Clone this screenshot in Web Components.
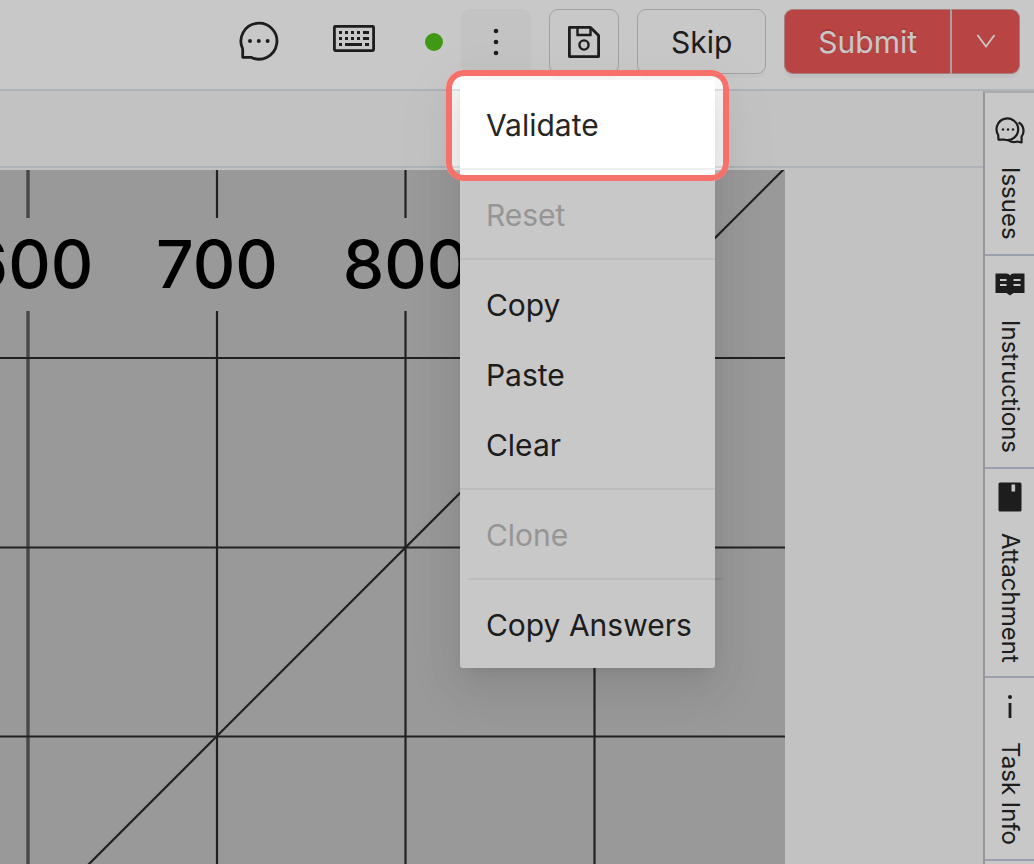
<!DOCTYPE html>
<html lang="en">
  <head>
    <meta charset="UTF-8" />
    <meta name="viewport" content="width=device-width, initial-scale=1.0" />
    <title>Labeling editor</title>

    <style>
      :root {
        font-family: Inter, "Liberation Sans", sans-serif;
        font-size: 30px;
        color: #262626;
        --line: #dde4ec;
        --accent: #ec5757;
      }

      * {
        box-sizing: border-box;
      }

      body {
        margin: 0;
        height: 100vh;
        overflow: hidden;
        display: flex;
        flex-direction: column;
        background-color: #f8f8f8;
      }

      main {
        flex: 1;
        min-height: 0;
        display: flex;
      }
    </style>
  </head>

  <body>
    <template id="top-bar">
      <style>
        :host {
          display: flex;
          justify-content: flex-end;
          align-items: center;
          gap: 18px;
          padding: 9px 14px 15px;
          border-bottom: 2px solid var(--line);
          background-color: #fff;
          position: relative;
          z-index: 1;
        }
      </style>
      <slot></slot>
    </template>

    <template id="tool-icons">
      <style>
        :host {
          display: flex;
          align-items: center;
          gap: 50px;
        }

        button {
          display: flex;
          padding: 0;
          border: none;
          background-color: transparent;
          color: inherit;
        }

        .dot {
          width: 18px;
          height: 18px;
          border-radius: 50%;
          background-color: #52c41a;
        }
      </style>
      <button aria-label="Comments">
        <svg width="44" height="42" viewBox="0 0 44 42" fill="none" stroke="currentColor" stroke-width="2.8">
          <path d="M3.5 27.5A18 18 0 1 1 12 36.3H3.7V28.8Z" stroke-linejoin="round" />
          <g fill="currentColor" stroke="none">
            <circle cx="11" cy="20" r="2" />
            <circle cx="19.8" cy="20" r="2" />
            <circle cx="28.6" cy="20" r="2" />
          </g>
        </svg>
      </button>
      <button aria-label="Shortcuts">
        <svg width="42" height="38" viewBox="0 0 42 38" fill="currentColor">
          <rect x="1.4" y="3.4" width="39.2" height="24.2" rx="1" fill="none" stroke="currentColor" stroke-width="2.8" />
          <path d="M6 8h3v3H6zM12 8h3v3h-3zM18 8h3v3h-3zM24 8h3v3h-3zM30 8h6v3h-6zM6 14h3v3H6zM12 14h3v3h-3zM18 14h3v3h-3zM24 14h3v3h-3zM30 14h6v3h-6zM6 20h3v3H6zM12 20h17v3H12zM32 20h4v3h-4z" />
        </svg>
      </button>
      <div class="dot"></div>
    </template>

    <template id="tool-button">
      <style>
        :host {
          display: block;
        }

        button {
          display: flex;
          justify-content: center;
          align-items: center;
          min-width: 70px;
          height: 65px;
          padding: 0 16px;
          font: inherit;
          color: inherit;
          border: 1px solid #cfcfcf;
          border-radius: 9px;
          background-color: #fff;
          box-shadow: 0 4px 0 rgba(0, 0, 0, 0.02);
        }

        :host([wide]) button {
          padding: 0 33px;
        }

        :host([plain]) button {
          border-color: transparent;
          background-color: #f9f9f9;
          box-shadow: none;
        }
      </style>
      <button><slot></slot></button>
    </template>

    <template id="submit-button">
      <style>
        :host {
          display: flex;
        }

        button {
          height: 65px;
          display: flex;
          align-items: center;
          justify-content: center;
          font: inherit;
          color: #fff;
          border: 1px solid #d9a0a0;
          background-color: var(--accent);
          box-shadow: 0 4px 0 rgba(0, 0, 0, 0.04);
          text-shadow: 0 -2px 0 rgba(0, 0, 0, 0.12);
        }

        .main {
          padding: 0 33px;
          border-right: none;
          border-radius: 9px 0 0 9px;
        }

        .more {
          width: 70px;
          padding: 0;
          border-left: 2px solid #d0d0d0;
          border-radius: 0 9px 9px 0;
        }
      </style>
      <button class="main"><slot></slot></button>
      <button class="more" aria-label="More submit options">
        <svg width="20" height="20" viewBox="0 0 20 20" fill="none" stroke="currentColor" stroke-width="1.8">
          <path d="M1.5 3L10 14.5 18.5 3" />
        </svg>
      </button>
    </template>

    <template id="more-menu">
      <style>
        :host {
          display: block;
          position: relative;
        }

        .menu {
          position: absolute;
          top: 71px;
          left: -1px;
          width: 255px;
          padding: 10px 0 8px;
          background-color: #fff;
          border-radius: 3px;
          box-shadow: 0 6px 12px -8px rgba(0, 0, 0, 0.12),
            0 12px 36px rgba(0, 0, 0, 0.08),
            0 20px 60px 16px rgba(0, 0, 0, 0.05);
        }

        /* dims the page around the item being explained */
        .spotlight {
          box-sizing: border-box;
          position: absolute;
          inset: -10px -14px auto;
          height: 111px;
          border: 6px solid #f7716b;
          border-radius: 18px;
          box-shadow: 0 0 0 9999px rgba(0, 0, 0, 0.216);
          pointer-events: none;
        }
      </style>
      <tool-button plain>
        <svg width="36" height="36" viewBox="0 0 36 36" fill="currentColor" aria-label="More">
          <circle cx="18" cy="7" r="2.3" />
          <circle cx="18" cy="18" r="2.3" />
          <circle cx="18" cy="29" r="2.3" />
        </svg>
      </tool-button>
      <div class="menu">
        <slot></slot>
        <div class="spotlight"></div>
      </div>
    </template>

    <template id="menu-item">
      <style>
        :host {
          display: block;
        }

        button {
          display: block;
          width: 100%;
          height: 70px;
          padding: 0 26px;
          border: none;
          background-color: transparent;
          font: inherit;
          color: inherit;
          text-align: left;
          white-space: nowrap;
        }

        button:disabled {
          color: #bfbfbf;
        }
      </style>
      <button><slot></slot></button>
    </template>

    <template id="menu-divider">
      <style>
        :host {
          display: block;
          height: 2px;
          margin: 8px 0 10px;
          background-color: rgba(0, 0, 0, 0.06);
        }

        :host([inset]) {
          margin-left: 8px;
          margin-right: -8px;
        }
      </style>
    </template>

    <template id="grid-canvas">
      <style>
        :host {
          flex: 1;
          min-width: 0;
          display: flex;
          flex-direction: column;
        }

        .tools {
          height: 75px;
          flex: none;
          border-bottom: 2px solid var(--line);
        }

        .view {
          flex: 1;
          min-height: 0;
          padding-top: 2px;
          overflow: hidden;
        }

        svg {
          display: block;
          background-color: #c4c4c4;
        }
      </style>
      <div class="tools"></div>
      <div class="view">
        <svg width="785" height="756" viewBox="0 0 785 756" stroke="#2b2b2b" stroke-width="2.2">
          <path d="M28 0V48M28 141V756" stroke="#5c5c5c" stroke-width="3.4" />
          <path d="M217 0V48M217 141V756M405.5 0V48M405.5 141V756M594.5 0V48M594.5 141V756" />
          <path d="M0 188H785M0 377.5H785M0 566.5H785" />
          <path d="M785 -2L27 756" />
          <g font-size="66" font-weight="500" fill="#000" stroke="none" text-anchor="middle">
            <text x="30" y="118">600</text>
            <text x="217" y="118">700</text>
            <text x="406" y="118">800</text>
          </g>
        </svg>
      </div>
    </template>

    <template id="side-tabs">
      <style>
        :host {
          display: block;
          flex: none;
          width: 51px;
          padding-top: 10px;
          border-left: 2px solid #c0c0c0;
          border-top: 2px solid #d9d9d9;
          background-color: #fff;
          overflow: hidden;
        }
      </style>
      <slot></slot>
    </template>

    <template id="side-tab">
      <style>
        :host {
          display: block;
        }

        button {
          display: flex;
          flex-direction: column;
          align-items: center;
          gap: 21px;
          width: 100%;
          padding: 13px 0 14px;
          border: none;
          border-bottom: 2px solid #c3ccda;
          background-color: transparent;
          font: inherit;
          font-size: 24px;
          line-height: 30px;
          color: inherit;
        }

        .label {
          writing-mode: vertical-rl;
          white-space: nowrap;
        }

        .icon {
          display: flex;
          height: 30px;
        }
      </style>
      <button>
        <span class="icon"><slot name="icon"></slot></span>
        <span class="label"><slot></slot></span>
      </button>
    </template>

    <!--  -->

    <top-bar>
      <tool-icons></tool-icons>
      <more-menu>
        <menu-item>Validate</menu-item>
        <menu-divider></menu-divider>
        <menu-item disabled>Reset</menu-item>
        <menu-divider></menu-divider>
        <menu-item>Copy</menu-item>
        <menu-item>Paste</menu-item>
        <menu-item>Clear</menu-item>
        <menu-divider></menu-divider>
        <menu-item disabled>Clone</menu-item>
        <menu-divider inset></menu-divider>
        <menu-item>Copy Answers</menu-item>
      </more-menu>
      <tool-button>
        <svg width="32" height="32" viewBox="0 0 32 32" fill="none" stroke="currentColor" stroke-width="2.8" aria-label="Save">
          <path d="M1.4 1.4H22.5L30.6 9.5V30.6H1.4Z" stroke-linejoin="round" />
          <path d="M9.5 2V9H22.5V2" stroke-width="2.4" />
          <circle cx="16" cy="19" r="4.6" stroke-width="2.4" />
        </svg>
      </tool-button>
      <tool-button wide>Skip</tool-button>
      <submit-button>Submit</submit-button>
    </top-bar>

    <main>
      <grid-canvas></grid-canvas>
      <side-tabs>
        <side-tab>
          <svg slot="icon" width="30" height="30" viewBox="0 0 30 30" fill="none" stroke="currentColor" stroke-width="2.2">
            <path d="M3.2 19A10.8 10.8 0 1 1 9.5 23.7H3.5Z" stroke-linejoin="round" />
            <path d="M23.5 6.5C29.5 9.5 29.5 17 26.6 20.5V26.5L22 25.5C18 26.8 15 25.8 13 24" stroke-linejoin="round" />
            <g fill="currentColor" stroke="none">
              <circle cx="8" cy="13.5" r="1.2" />
              <circle cx="13" cy="13.5" r="1.2" />
              <circle cx="18" cy="13.5" r="1.2" />
            </g>
          </svg>
          Issues
        </side-tab>
        <side-tab>
          <svg slot="icon" width="30" height="30" viewBox="0 0 30 30">
            <path d="M0.5 4.5H11.5Q14 4.5 15 6.5Q16 4.5 18.5 4.5H29.5V24H18.5L15 26.5L11.5 24H0.5Z" fill="currentColor" />
            <path d="M5 11H11.5M5 16H11.5M18.5 11H25.5M18.5 16H25.5" stroke="#fff" stroke-width="1.8" />
          </svg>
          Instructions
        </side-tab>
        <side-tab>
          <svg slot="icon" width="30" height="30" viewBox="0 0 30 30">
            <rect x="3.5" y="0.5" width="23" height="29" rx="1.5" fill="currentColor" />
            <rect x="16.5" y="2.5" width="3.6" height="7" fill="#fff" />
          </svg>
          Attachment
        </side-tab>
        <side-tab>
          <svg slot="icon" width="30" height="30" viewBox="0 0 30 30" fill="currentColor">
            <circle cx="15" cy="6" r="2" />
            <rect x="13.6" y="12" width="2.8" height="15" />
          </svg>
          Task Info
        </side-tab>
      </side-tabs>
    </main>

    <!--  -->

    <script>
      class BaseElement extends HTMLElement {
        constructor() {
          super();
          let template = document.getElementById(this.localName);
          const shadowRoot = this.attachShadow({ mode: "open" });
          shadowRoot.appendChild(template.content.cloneNode(true));
        }
      }

      class MenuItem extends BaseElement {
        connectedCallback() {
          this.shadowRoot.querySelector("button").disabled =
            this.hasAttribute("disabled");
        }
      }

      customElements.define("top-bar", class extends BaseElement {});
      customElements.define("tool-icons", class extends BaseElement {});
      customElements.define("tool-button", class extends BaseElement {});
      customElements.define("submit-button", class extends BaseElement {});
      customElements.define("more-menu", class extends BaseElement {});
      customElements.define("menu-item", MenuItem);
      customElements.define("menu-divider", class extends BaseElement {});
      customElements.define("grid-canvas", class extends BaseElement {});
      customElements.define("side-tabs", class extends BaseElement {});
      customElements.define("side-tab", class extends BaseElement {});
    </script>
  </body>
</html>
